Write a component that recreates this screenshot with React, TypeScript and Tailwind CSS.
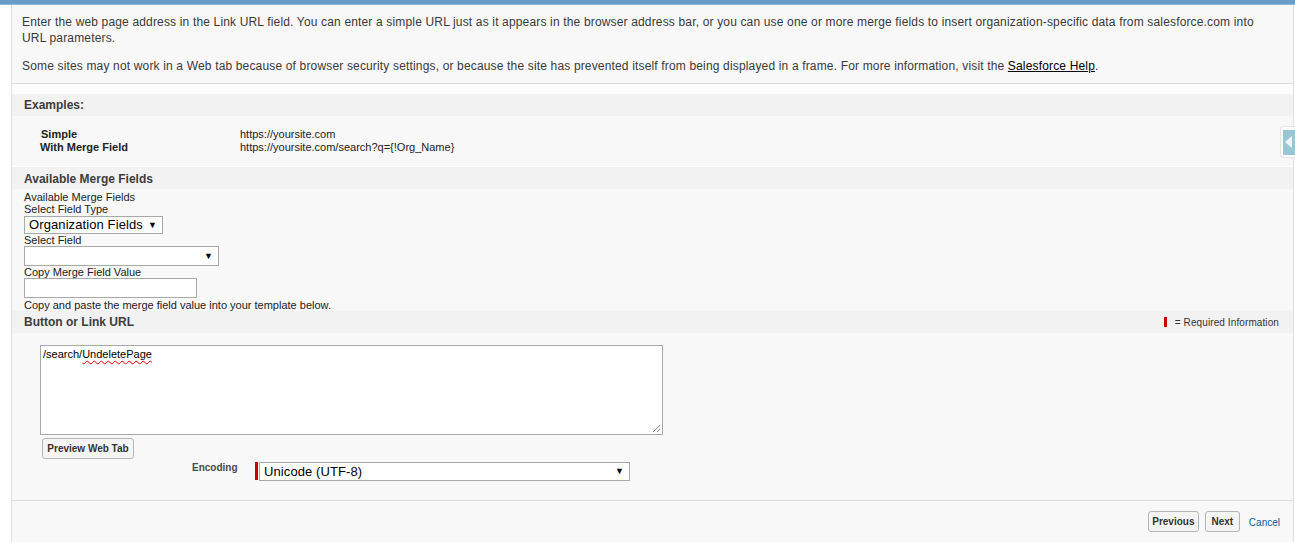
export default function App() {
  return (
    <div className="relative h-[542px] w-full overflow-hidden bg-white text-[#333] font-['Liberation_Sans',Arial,sans-serif]">
      {/* top band */}
      <div className="h-[4px] bg-[#6a9cc8]" />
      <div className="h-[1px] bg-[#8fb6d8]" />

      <div className="ml-[11px] mr-[1px] flex h-[537px] flex-col border-x border-[#e0e0e0] bg-[#f8f8f8]">
        {/* intro */}
        <div className="border-b border-[#dcdcdc] pl-[10px] pr-[22px] pt-[9px] pb-[9px] text-[12px] leading-[16px] tracking-[0.16px] text-[#3a3a3a]">
          <p>
            Enter the web page address in the Link URL field. You can enter a simple URL just as it appears in the browser address bar, or you can use one or more merge fields to insert organization-specific data from salesforce.com into URL parameters.
          </p>
          <p className="mt-[12px]">
            Some sites may not work in a Web tab because of browser security settings, or because the site has prevented itself from being displayed in a frame. For more information, visit the{' '}
            <span className="text-black underline">Salesforce Help</span>.
          </p>
        </div>
        <div className="h-[10px] bg-[#fcfcfc]" />

        {/* Examples */}
        <div className="flex h-[22px] items-center bg-[#f2f2f2] pl-[12px] text-[12px] font-bold text-[#3d3d3d]">Examples:</div>
        <div className="h-[51px] border-b border-white pt-[12px] text-[11px] leading-[13px] text-[#222]">
          <div className="flex">
            <span className="w-[228px] pl-[29px] font-bold">Simple</span>
            <span>https://yoursite.com</span>
          </div>
          <div className="flex">
            <span className="w-[228px] pl-[28px] font-bold">With Merge Field</span>
            <span>https://yoursite.com/search?q={'{'}!Org_Name{'}'}</span>
          </div>
        </div>

        {/* Available Merge Fields */}
        <div className="flex h-[22px] items-center bg-[#f2f2f2] pl-[12px] pt-[1px] text-[12px] font-bold text-[#3d3d3d]">Available Merge Fields</div>
        <div className="flex flex-col items-start pl-[12px] pt-[2px] text-[11px] leading-[12px] text-[#222]">
          <span>Available Merge Fields</span>
          <span>Select Field Type</span>
          <div className="mt-[1px] flex h-[18px] w-[139px] items-center justify-between border border-[#a9a9a9] bg-white pl-[4px] pr-[5px] text-[13px] tracking-[0.1px] text-black">
            <span>Organization Fields</span>
            <span className="text-[9px]">▼</span>
          </div>
          <span>Select Field</span>
          <div className="flex h-[20px] w-[195px] items-center justify-end border border-[#a9a9a9] bg-white pr-[5px] text-black">
            <span className="text-[9px]">▼</span>
          </div>
          <span>Copy Merge Field Value</span>
          <div className="h-[20px] w-[173px] border border-[#a9a9a9] bg-white" />
          <span className="mt-[1px]">Copy and paste the merge field value into your template below.</span>
        </div>

        {/* Button or Link URL */}
        <div className="flex h-[22px] items-center justify-between bg-[#f2f2f2] pl-[12px] pr-[14px]">
          <span className="text-[12px] font-bold text-[#3d3d3d]">Button or Link URL</span>
          <span className="flex items-center text-[10px] tracking-[0.1px] text-[#333]">
            <span className="mr-[8px] h-[10px] w-[3px] bg-[#c00]" />= Required Information
          </span>
        </div>
        <div className="flex h-[168px] flex-col border-b border-[#dcdcdc] pl-[28px] pt-[12px]">
          <div className="relative h-[90px] w-[623px] border border-[#a9a9a9] bg-white px-[2px] pt-[1px] text-[11px] leading-[14px] text-black">
            /search/<span className="underline decoration-wavy decoration-[#e00] decoration-1 underline-offset-2">UndeletePage</span>
            <svg className="absolute bottom-[1px] right-[1px]" width="9" height="9" viewBox="0 0 9 9">
              <path d="M8 1 L1 8 M8 5 L5 8" stroke="#8a8a8a" strokeWidth="1" />
            </svg>
          </div>
          <button className="ml-[2px] mt-[3px] h-[21px] w-[92px] rounded-[3px] border border-[#b5b5b5] bg-[#f5f5f5] text-[10px] font-bold text-[#333]">
            Preview Web Tab
          </button>
          <div className="mt-[3px] flex items-start">
            <span className="w-[212px] pl-[152px] text-[10px] leading-[12px] font-bold text-[#4a4a4a]">Encoding</span>
            <span className="ml-[3px] h-[18px] w-[3px] bg-[#c00]" />
            <div className="ml-[1px] flex h-[19px] w-[371px] items-center justify-between border border-[#a9a9a9] bg-white pl-[4px] pr-[5px] text-[13px] tracking-[0.1px] text-black">
              <span>Unicode (UTF-8)</span>
              <span className="text-[9px]">▼</span>
            </div>
          </div>
        </div>

        {/* footer */}
        <div className="flex flex-1 items-start justify-end pr-[13px] pt-[10px]">
          <button className="h-[21px] w-[51px] rounded-[3px] border border-[#b5b5b5] bg-[#f5f5f5] text-[10px] font-bold text-[#333]">Previous</button>
          <button className="ml-[6px] h-[21px] w-[35px] rounded-[3px] border border-[#b5b5b5] bg-[#f5f5f5] text-[10px] font-bold text-[#333]">Next</button>
          <span className="ml-[9px] pt-[4px] text-[10px] text-[#015ba7]">Cancel</span>
        </div>
      </div>

      {/* collapse tab on the right edge */}
      <div className="absolute left-[1280px] top-[126px] flex h-[32px] w-[20px] items-center rounded-l-[4px] border border-r-0 border-[#e4e4e4] bg-white pl-[2px]">
        <div className="flex h-[25px] w-[14px] items-center bg-[#98c6d2] pl-[2px]">
          <svg width="8" height="12" viewBox="0 0 8 12">
            <path d="M7 0 L0 6 L7 12 Z" fill="#eef6f8" />
          </svg>
        </div>
      </div>
    </div>
  );
}
